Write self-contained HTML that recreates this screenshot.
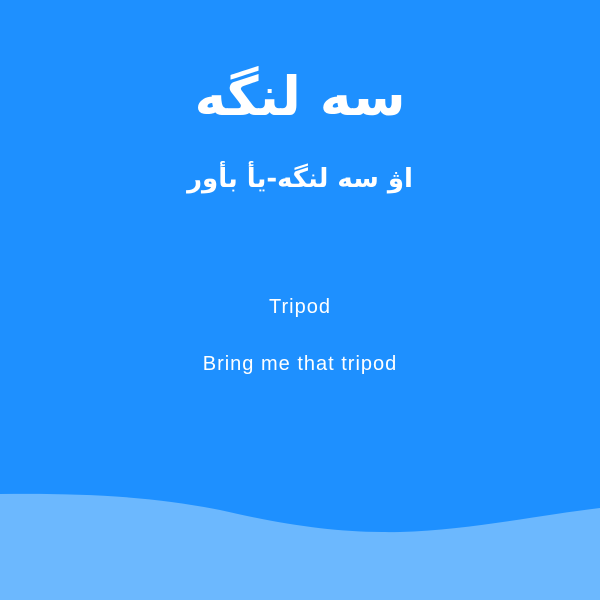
<!DOCTYPE html>
<html><head><meta charset="utf-8"><style>
html,body{margin:0;padding:0}
body{width:600px;height:600px;background:#1e90ff;position:relative;overflow:hidden;font-family:"Liberation Sans","DejaVu Sans",sans-serif;color:#fff}
.t{position:absolute;left:0;width:600px;text-align:center;white-space:nowrap}
</style></head><body>
<div class="t" style="top:62px;font-size:54px;font-weight:bold;line-height:70px;font-family:'DejaVu Sans',sans-serif" dir="rtl">سه لنگه</div>
<div class="t" style="top:159px;font-size:26px;font-weight:bold;line-height:40px;font-family:'DejaVu Sans',sans-serif" dir="rtl">اۋ سه لنگه-یأ بأور</div>
<div class="t" style="top:295px;font-size:20px;line-height:24px;letter-spacing:1px">Tripod</div>
<div class="t" style="top:352px;font-size:20px;line-height:24px;letter-spacing:1px">Bring me that tripod</div>
<svg style="position:absolute;left:0;top:0" width="600" height="600"><path d="M0 494 C80 493 150 496 220 510 C290 526 340 533 400 532 C470 530 540 515 600 508 L600 600 L0 600Z" fill="#6cb8fe"/></svg>
</body></html>
